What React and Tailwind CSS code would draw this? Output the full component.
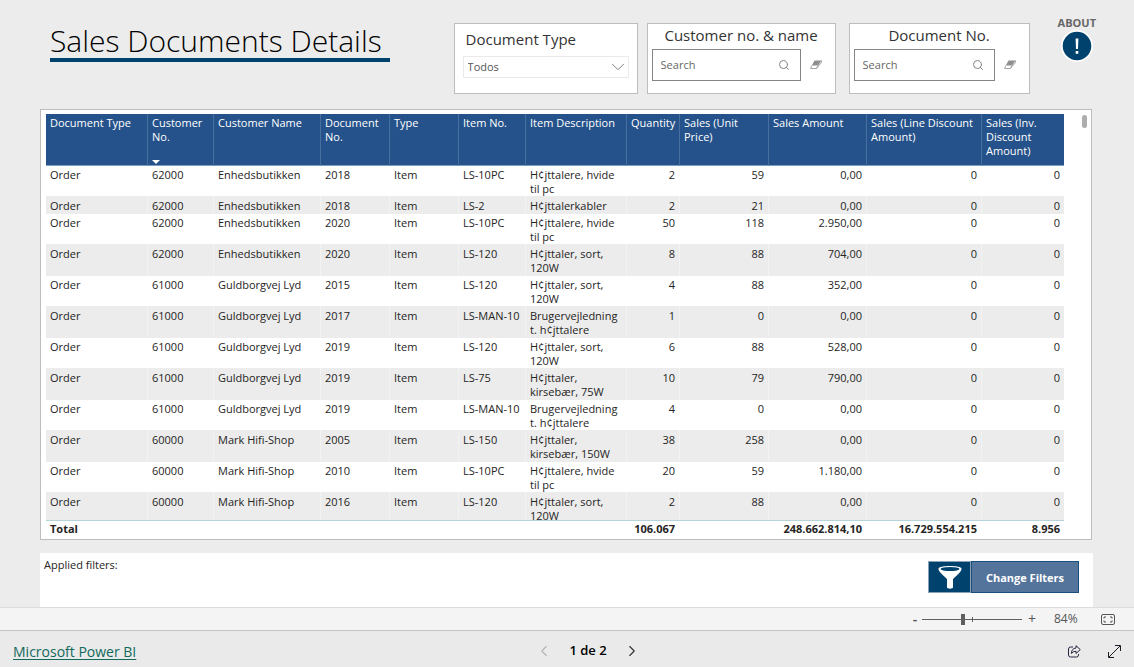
import React, { useState } from 'react';
import { ChevronDown, ChevronLeft, ChevronRight, Search } from 'lucide-react';

const columns = [
    { label: 'Document Type', width: 'w-[102px]' },
    { label: 'Customer No.', width: 'w-[66px]', sorted: true },
    { label: 'Customer Name', width: 'w-[107px]' },
    { label: 'Document No.', width: 'w-[69px]' },
    { label: 'Type', width: 'w-[69px]' },
    { label: 'Item No.', width: 'w-[67px]' },
    { label: 'Item Description', width: 'w-[101px]' },
    { label: 'Quantity', width: 'w-[53px]', numeric: true },
    { label: 'Sales (Unit Price)', width: 'w-[89px]', numeric: true },
    { label: 'Sales Amount', width: 'w-[98px]', numeric: true },
    { label: 'Sales (Line Discount Amount)', width: 'w-[115px]', numeric: true },
    { label: 'Sales (Inv. Discount Amount)', width: 'w-[83px]', numeric: true },
];

const rows = [
    ['Order', '62000', 'Enhedsbutikken', '2018', 'Item', 'LS-10PC', 'H¢jttalere, hvide til pc', '2', '59', '0,00', '0', '0'],
    ['Order', '62000', 'Enhedsbutikken', '2018', 'Item', 'LS-2', 'H¢jttalerkabler', '2', '21', '0,00', '0', '0'],
    ['Order', '62000', 'Enhedsbutikken', '2020', 'Item', 'LS-10PC', 'H¢jttalere, hvide til pc', '50', '118', '2.950,00', '0', '0'],
    ['Order', '62000', 'Enhedsbutikken', '2020', 'Item', 'LS-120', 'H¢jttaler, sort, 120W', '8', '88', '704,00', '0', '0'],
    ['Order', '61000', 'Guldborgvej Lyd', '2015', 'Item', 'LS-120', 'H¢jttaler, sort, 120W', '4', '88', '352,00', '0', '0'],
    ['Order', '61000', 'Guldborgvej Lyd', '2017', 'Item', 'LS-MAN-10', 'Brugervejledning t. h¢jttalere', '1', '0', '0,00', '0', '0'],
    ['Order', '61000', 'Guldborgvej Lyd', '2019', 'Item', 'LS-120', 'H¢jttaler, sort, 120W', '6', '88', '528,00', '0', '0'],
    ['Order', '61000', 'Guldborgvej Lyd', '2019', 'Item', 'LS-75', 'H¢jttaler, kirsebær, 75W', '10', '79', '790,00', '0', '0'],
    ['Order', '61000', 'Guldborgvej Lyd', '2019', 'Item', 'LS-MAN-10', 'Brugervejledning t. h¢jttalere', '4', '0', '0,00', '0', '0'],
    ['Order', '60000', 'Mark Hifi-Shop', '2005', 'Item', 'LS-150', 'H¢jttaler, kirsebær, 150W', '38', '258', '0,00', '0', '0'],
    ['Order', '60000', 'Mark Hifi-Shop', '2010', 'Item', 'LS-10PC', 'H¢jttalere, hvide til pc', '20', '59', '1.180,00', '0', '0'],
    ['Order', '60000', 'Mark Hifi-Shop', '2016', 'Item', 'LS-120', 'H¢jttaler, sort, 120W', '2', '88', '0,00', '0', '0'],
];

const totals = ['Total', '', '', '', '', '', '', '106.067', '', '248.662.814,10', '16.729.554.215', '8.956'];

const EraserIcon = () => (
    <svg viewBox="0 0 12 10" className="w-3 h-[10px]" aria-hidden="true">
        <path d="M4.5 0.5H11.5L8.2 5.5H1.8Z" fill="#8f8f8f" />
        <path d="M1.8 5.5L0.6 8.5H6.3L8.2 5.5M6.3 8.5L11.5 2.5V0.5" fill="none" stroke="#8f8f8f" strokeWidth="0.8" />
    </svg>
);

const SearchFilter = ({ id, label }) => {
    const [query, setQuery] = useState('');

    return (
        <div className="h-[71px] border border-[#bdbdbd] bg-white px-1">
            <label htmlFor={id} className="block h-[25px] text-center text-[15px] leading-[22px] text-[#333]">
                {label}
            </label>
            <div className="flex items-center">
                <div className="flex flex-1 h-8 items-center border border-[#858585] pl-2 pr-[10px]">
                    <input
                        id={id}
                        type="text"
                        placeholder="Search"
                        value={query}
                        onChange={(e) => setQuery(e.target.value)}
                        className="w-0 flex-1 pt-px text-[11px] text-[#333] outline-none placeholder:text-[#666]"
                    />
                    <Search className="w-3 h-3 text-[#858585]" strokeWidth={2} />
                </div>
                <button type="button" aria-label={`Clear ${label}`} onClick={() => setQuery('')} className="flex w-[30px] justify-center">
                    <EraserIcon />
                </button>
            </div>
        </div>
    );
};

const App = () => {
    const [zoom, setZoom] = useState(84);

    return (
        <div className="flex h-screen flex-col bg-[#ececec] font-['Open_Sans','Noto_Sans',sans-serif] text-[#252423]">
            {/* Header */}
            <header className="flex h-[109px] shrink-0 items-start justify-between pl-[50px] pr-[38px] pt-[23px]">
                <h1 className="h-[39px] w-[340px] border-b-4 border-[#00426e] text-[30px] font-light leading-9 text-black">
                    Sales Documents Details
                </h1>
                <div className="flex items-start">
                    <div className="h-[71px] w-[184px] border border-[#bdbdbd] bg-white px-2">
                        <label htmlFor="document-type" className="block h-8 pl-[3px] text-[15px] leading-[30px] text-[#333]">
                            Document Type
                        </label>
                        <div className="relative">
                            <select
                                id="document-type"
                                className="block h-[22px] w-full appearance-none border border-[#eaeaea] bg-white pl-1 text-[11px] text-[#555] outline-none"
                            >
                                <option>Todos</option>
                            </select>
                            <ChevronDown className="pointer-events-none absolute right-0 top-0 w-[22px] h-[22px] text-[#777]" strokeWidth={1} />
                        </div>
                    </div>
                    <div className="ml-[9px] w-[189px]">
                        <SearchFilter id="customer" label="Customer no. & name" />
                    </div>
                    <div className="ml-[13px] w-[181px]">
                        <SearchFilter id="document-no" label="Document No." />
                    </div>
                    <button type="button" className="-mt-2 ml-7 flex flex-col items-center text-[11px] font-bold leading-4 text-[#666]">
                        ABOUT
                        <svg viewBox="0 0 32 32" className="-mt-px w-8 h-8" aria-hidden="true">
                            <circle cx="16" cy="16" r="16" fill="#fff" />
                            <circle cx="16" cy="16" r="14.3" fill="#00426e" />
                            <path d="M14.6 8.5H17.4L17 19H15Z" fill="#fff" />
                            <rect x="14.7" y="21" width="2.6" height="2.8" fill="#fff" />
                        </svg>
                    </button>
                </div>
            </header>

            {/* Sales documents */}
            <main className="ml-10 mr-[42px] flex min-h-0 flex-1 border border-[#bdbdbd] bg-white pl-[5px] pr-1 pt-1">
                <div className="min-w-0 flex-1 overflow-hidden">
                    <table className="w-full table-fixed border-separate border-spacing-0 text-[11px] leading-[14px]">
                        <thead className="sticky top-0">
                            <tr>
                                {columns.map((col) => (
                                    <th
                                        key={col.label}
                                        scope="col"
                                        className={`${col.width} h-[52px] border-b border-r border-b-[#7f9fc4] border-r-[#47709f] bg-[#25528a] px-1 pt-[2px] text-left align-top font-normal text-white last:border-r-0`}
                                    >
                                        <div className="flex h-12 flex-col justify-between">
                                            {col.label}
                                            {col.sorted && (
                                                <svg viewBox="0 0 8 4" className="w-2 h-1" aria-hidden="true">
                                                    <path d="M0 0H8L4 4Z" fill="#fff" />
                                                </svg>
                                            )}
                                        </div>
                                    </th>
                                ))}
                            </tr>
                        </thead>
                        <tbody>
                            {rows.map((row, i) => (
                                <tr key={i} className="even:bg-[#ececec]">
                                    {row.map((value, j) => (
                                        <td
                                            key={j}
                                            className={`border-b border-r border-b-[#ececec] border-r-white/40 px-1 pt-[2px] align-top ${columns[j].numeric ? 'text-right' : ''}`}
                                        >
                                            {value}
                                        </td>
                                    ))}
                                </tr>
                            ))}
                        </tbody>
                        <tfoot className="sticky bottom-0">
                            <tr>
                                {totals.map((value, j) => (
                                    <td
                                        key={j}
                                        className={`h-[19px] border-t border-[#b5d3da] bg-white pb-[2px] pl-1 pr-[5px] font-bold ${columns[j].numeric ? 'text-right' : ''}`}
                                    >
                                        {value}
                                    </td>
                                ))}
                            </tr>
                        </tfoot>
                    </table>
                </div>
                <div className="flex w-[23px] justify-end">
                    <div className="mt-px h-[13px] w-[5px] rounded-full bg-[#adadad]" />
                </div>
            </main>

            {/* Filters */}
            <section className="ml-10 mr-[41px] mt-[13px] flex h-[54px] shrink-0 items-start justify-between bg-white pl-1 pr-[14px]">
                <p className="pt-1 text-[11px] leading-4">Applied filters:</p>
                <div className="mt-2 flex h-8">
                    <button type="button" aria-label="Filters" className="flex w-[43px] items-center justify-center border border-[#8aa0b4] bg-[#00426e]">
                        <svg viewBox="0 0 24 24" className="w-6 h-6" aria-hidden="true">
                            <path d="M0.5 3.5C0.5 0 23.5 0 23.5 3.5C23.5 6 22 7.5 15 14V22.5C15 24 9 24 9 22.5V14C2 7.5 0.5 6 0.5 3.5Z" fill="#fff" />
                            <ellipse cx="12" cy="4" rx="9.5" ry="2" fill="#00426e" />
                        </svg>
                    </button>
                    <button type="button" className="w-[108px] border border-[#1c4e7c] bg-[#54749b] pt-[2px] text-[11px] font-bold text-white">
                        Change Filters
                    </button>
                </div>
            </section>

            {/* Zoom bar */}
            <div className="flex h-6 shrink-0 items-center justify-end border-b border-t border-b-[#c4c4c4] border-t-[#dcdcdc] bg-[#f4f4f4] pr-[19px] text-[#555]">
                <button type="button" aria-label="Zoom out" onClick={() => setZoom(zoom - 10)} className="w-3 text-sm font-semibold leading-5">
                    -
                </button>
                <div className="relative ml-px flex w-[100px] items-center">
                    <input
                        type="range"
                        aria-label="Zoom"
                        min="10"
                        max="190"
                        value={zoom}
                        onChange={(e) => setZoom(Number(e.target.value))}
                        className="h-3 w-full appearance-none bg-[linear-gradient(#606060,#606060)] bg-[length:100%_1px] bg-center bg-no-repeat [&::-webkit-slider-thumb]:h-[11px] [&::-webkit-slider-thumb]:w-1 [&::-webkit-slider-thumb]:appearance-none [&::-webkit-slider-thumb]:bg-[#606060]"
                    />
                    <span className="absolute left-1/2 h-[5px] w-px bg-[#606060]" />
                </div>
                <button type="button" aria-label="Zoom in" onClick={() => setZoom(zoom + 10)} className="w-5 text-sm leading-5">
                    +
                </button>
                <span className="ml-3 w-[27px] text-xs">{zoom}%</span>
                <button type="button" aria-label="Fit to page" className="ml-5">
                    <svg viewBox="0 0 14 11" className="w-[14px] h-[11px]" fill="none" stroke="#555" aria-hidden="true">
                        <rect x="0.5" y="0.5" width="13" height="10" rx="1.5" />
                        <path d="M3 4.5V3H5M9 3H11V4.5M11 6.5V8H9M5 8H3V6.5" />
                    </svg>
                </button>
            </div>

            {/* Footer */}
            <footer className="grid h-9 shrink-0 grid-cols-[1fr_auto_1fr] items-center bg-[#eaeaea] px-[13px] pt-1">
                <a href="#" className="justify-self-start text-[14px] text-[#11695c] underline underline-offset-2">
                    Microsoft Power BI
                </a>
                <nav className="ml-[42px] flex items-center gap-4 text-[13px] font-semibold text-black">
                    <button type="button" aria-label="Previous page" disabled className="text-[#b4b4b4]">
                        <ChevronLeft className="w-[18px] h-[18px]" strokeWidth={1.5} />
                    </button>
                    1 de 2
                    <button type="button" aria-label="Next page" className="text-[#333]">
                        <ChevronRight className="w-[18px] h-[18px]" strokeWidth={1.5} />
                    </button>
                </nav>
                <div className="flex gap-[27px] justify-self-end">
                    <button type="button" aria-label="Share">
                        <svg viewBox="0 0 13 13" className="w-[13px] h-[13px]" fill="none" stroke="#2b2340" aria-hidden="true">
                            <path d="M5 2H2.5Q0.5 2 0.5 4V10Q0.5 12 2.5 12H8.5Q10.5 12 10.5 10V9" />
                            <path d="M8 0.7L12.3 4.6L8 8.5V6.3Q5 6.2 3.4 8.4Q3.6 3.4 8 3Z" strokeLinejoin="round" />
                        </svg>
                    </button>
                    <button type="button" aria-label="Full screen">
                        <svg viewBox="0 0 13 13" className="w-[13px] h-[13px]" fill="none" stroke="#1f1a26" aria-hidden="true">
                            <path d="M1 12L12 1M7 0.5H12.5V6M0.5 7V12.5H6" />
                        </svg>
                    </button>
                </div>
            </footer>
        </div>
    );
};

export default App;
